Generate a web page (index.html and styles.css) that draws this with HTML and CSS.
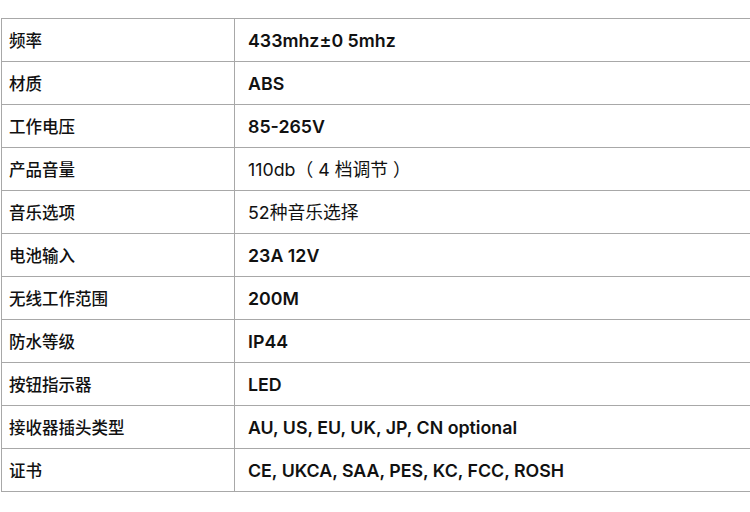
FILE: index.html
```html
<!DOCTYPE html>
<html lang="zh">
<head>
<meta charset="utf-8">
<link rel="stylesheet" href="styles.css">
</head>
<body>
<table class="spec">
  <tr><td class="k">频率</td><td class="v">433mhz±0 5mhz</td></tr>
  <tr><td class="k">材质</td><td class="v">ABS</td></tr>
  <tr><td class="k">工作电压</td><td class="v">85-265V</td></tr>
  <tr><td class="k">产品音量</td><td class="v light">110db（ 4 档调节 ）</td></tr>
  <tr><td class="k">音乐选项</td><td class="v light">52种音乐选择</td></tr>
  <tr><td class="k">电池输入</td><td class="v">23A 12V</td></tr>
  <tr><td class="k">无线工作范围</td><td class="v">200M</td></tr>
  <tr><td class="k">防水等级</td><td class="v">IP44</td></tr>
  <tr><td class="k">按钮指示器</td><td class="v">LED</td></tr>
  <tr><td class="k">接收器插头类型</td><td class="v">AU, US, EU, UK, JP, CN optional</td></tr>
  <tr><td class="k">证书</td><td class="v">CE, UKCA, SAA, PES, KC, FCC, ROSH</td></tr>
</table>
</body>
</html>
```
FILE: styles.css
```css
html, body {
  margin: 0;
  padding: 0;
  background: #fff;
}
body {
  padding: 18px 0 0 1px;
  overflow: hidden;
  font-family: Inter, "Noto Sans CJK SC", sans-serif;
  color: #111;
}
.spec {
  border-collapse: collapse;
  width: 760px;
  table-layout: fixed;
}
.spec td {
  height: 40px;
  padding: 2px 0 0 0;
  border: 1px solid #a8a8a8;
  line-height: 20px;
  vertical-align: middle;
}
.spec tr td:last-child {
  border-right: none;
}
.k {
  width: 225px;
  padding-left: 7px !important;
  font-size: 16.5px;
  font-weight: 500;
}
.v {
  padding-left: 13px !important;
  font-size: 17.8px;
  font-weight: 600;
}
.v.light {
  font-weight: 400;
}
```
